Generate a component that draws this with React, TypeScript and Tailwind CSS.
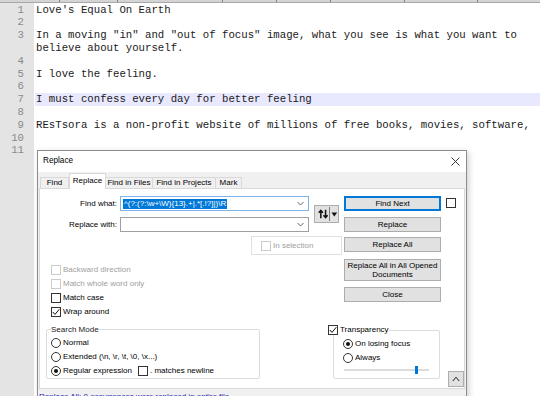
import React from "react";

type Line = { n: string; text: string; hl?: boolean };

const lines: Line[] = [
  { n: "1", text: "Love's Equal On Earth" },
  { n: "2", text: "" },
  { n: "3", text: 'In a moving "in" and "out of focus" image, what you see is what you want to' },
  { n: "", text: "believe about yourself." },
  { n: "4", text: "" },
  { n: "5", text: "I love the feeling." },
  { n: "6", text: "" },
  { n: "7", text: "I must confess every day for better feeling", hl: true },
  { n: "8", text: "" },
  { n: "9", text: "REsTsora is a non-profit website of millions of free books, movies, software," },
  { n: "10", text: "" },
  { n: "11", text: "" },
];

function Check({ checked, disabled }: { checked?: boolean; disabled?: boolean }) {
  return (
    <span
      className={
        disabled
          ? "w-[10px] h-[10px] border border-[#cccccc] bg-white flex items-center justify-center shrink-0"
          : "w-[10px] h-[10px] border border-[#333333] bg-white flex items-center justify-center shrink-0"
      }
    >
      {checked && (
        <svg width="8" height="8" viewBox="0 0 8 8">
          <polyline points="0.8,4 3,6.4 7.3,1.2" fill="none" stroke="#111" strokeWidth="1" />
        </svg>
      )}
    </span>
  );
}

function Radio({ checked }: { checked?: boolean }) {
  return (
    <span className="w-[10px] h-[10px] rounded-full border border-[#333333] bg-white flex items-center justify-center shrink-0">
      {checked && <span className="w-[4px] h-[4px] rounded-full bg-[#111111]" />}
    </span>
  );
}

function Chevron() {
  return (
    <svg width="7" height="5" viewBox="0 0 7 5" className="shrink-0">
      <polyline points="0.5,1 3.5,4 6.5,1" fill="none" stroke="#555" strokeWidth="0.9" />
    </svg>
  );
}

function Btn({ children, className }: { children: React.ReactNode; className: string }) {
  return (
    <div className={"flex items-center justify-center text-center leading-[9px] bg-[#e1e1e1] " + className}>
      {children}
    </div>
  );
}

export default function App() {
  return (
    <div className="relative w-[540px] h-[396px] overflow-hidden bg-white">
      {/* tab bar remnant */}
      <div className="h-[3px] flex bg-[#d4d4d4] border-b border-[#a8a8a8]">
        <div className="w-[60px] border-r border-[#808080]" />
        <div className="w-[58px] border-r border-[#808080]" />
        <div className="w-[105px] border-r border-[#808080]" />
        <div className="w-[54px] border-r border-[#808080]" />
        <div className="w-[54px] border-r border-[#808080]" />
        <div className="w-[74px] border-r border-[#808080]" />
        <div className="w-[73px] border-r border-[#808080]" />
        <div className="flex-1" />
      </div>

      {/* editor */}
      <div className="flex h-[393px] pt-[0.6px] font-['Liberation_Mono','Courier_New',monospace] text-[10.7px]">
        <div className="w-[34px] bg-[#e4e4e4] text-[#8a8a8a] -mt-[0.6px] pt-[0.6px]">
          {lines.map((l, i) => (
            <div key={i} className="h-[12.8px] leading-[12.8px] w-[24px] text-right">
              {l.n}
            </div>
          ))}
        </div>
        <div className="flex-1 pl-[2px] text-[#1a1a1a]">
          {lines.map((l, i) => (
            <div
              key={i}
              className={
                l.hl
                  ? "h-[12.8px] leading-[12.8px] whitespace-pre bg-[#e8e8ff] -ml-[1px] pl-[1px]"
                  : "h-[12.8px] leading-[12.8px] whitespace-pre"
              }
            >
              {l.text}
            </div>
          ))}
        </div>
      </div>

      {/* Replace dialog */}
      <div className="absolute left-[37px] top-[150px] w-[430px] h-[260px] border border-[#8c8c8c] bg-[#f0f0f0] shadow-[2px_2px_6px_rgba(0,0,0,0.18)] font-['Liberation_Sans',Arial,sans-serif] text-[8px] text-black">
        {/* title */}
        <div className="h-[21px] bg-white flex items-center justify-between pl-[5px] pr-[6px]">
          <span className="text-[8.2px]">Replace</span>
          <svg width="9" height="9" viewBox="0 0 9 9">
            <line x1="0.5" y1="0.5" x2="8.5" y2="8.5" stroke="#222" strokeWidth="0.9" />
            <line x1="8.5" y1="0.5" x2="0.5" y2="8.5" stroke="#222" strokeWidth="0.9" />
          </svg>
        </div>

        {/* tabs */}
        <div className="h-[16px] flex items-end pl-[2px]">
          <div className="w-[29px] h-[11px] border border-b-0 border-[#d9d9d9] bg-[#f0f0f0] flex items-center justify-center">Find</div>
          <div className="relative z-10 w-[37px] h-[16px] -mb-[1px] border border-b-0 border-[#d9d9d9] bg-white flex items-center justify-center pb-[1px]">Replace</div>
          <div className="w-[47px] h-[11px] border border-b-0 border-l-0 border-[#d9d9d9] bg-[#f0f0f0] flex items-center justify-center">Find in Files</div>
          <div className="w-[63px] h-[11px] border border-b-0 border-l-0 border-[#d9d9d9] bg-[#f0f0f0] flex items-center justify-center">Find in Projects</div>
          <div className="w-[26px] h-[11px] border border-b-0 border-l-0 border-[#d9d9d9] bg-[#f0f0f0] flex items-center justify-center">Mark</div>
        </div>

        {/* panel */}
        <div className="ml-[1px] w-[426px] h-[201px] border border-[#d9d9d9] bg-white flex flex-col">
          {/* top section */}
          <div className="flex items-start pt-[7px]">
            <div className="w-[302px] flex flex-col">
              <div className="flex items-center">
                <div className="flex flex-col gap-[6px]">
                  <div className="flex items-center h-[15px]">
                    <span className="w-[80px] text-right pr-[3px]">Find what:</span>
                    <div className="w-[189px] h-[15px] border border-[#7eb4ea] bg-white flex items-center pl-[2px] pr-[4px]">
                      <span className="bg-[#0078d7] text-white leading-[10px] px-[1px] whitespace-pre">{"^(?:(?:\\w+\\W){13}.+|.*[.!?]|)\\R"}</span>
                      <span className="flex-1" />
                      <Chevron />
                    </div>
                  </div>
                  <div className="flex items-center h-[15px]">
                    <span className="w-[80px] text-right pr-[3px]">Replace with:</span>
                    <div className="w-[189px] h-[15px] border border-[#a0a0a0] bg-white flex items-center pr-[4px]">
                      <span className="flex-1" />
                      <Chevron />
                    </div>
                  </div>
                </div>
                <div className="ml-[5px] w-[25px] h-[18px] border border-[#adadad] bg-[#e1e1e1] flex items-center pl-[3px]">
                  <svg width="11" height="10" viewBox="0 0 11 10">
                    <path d="M3 9.5V1.5M0.8 3.8L3 1.2L5.2 3.8" fill="none" stroke="#111" strokeWidth="1.6" />
                    <path d="M8 0.5V8.5M5.8 6.2L8 8.8L10.2 6.2" fill="none" stroke="#111" strokeWidth="1.6" />
                  </svg>
                  <span className="ml-[1px] w-[1px] h-[14px] bg-[#7a7a7a]" />
                  <svg width="7" height="5" viewBox="0 0 7 5" className="ml-[1px]">
                    <polygon points="0.5,0.5 6.5,0.5 3.5,4.5" fill="#111" />
                  </svg>
                </div>
              </div>

              <div className="ml-[211px] mt-[4px] w-[91px] h-[19px] border border-[#e0e0e0] flex items-center pl-[9px] text-[#a0a0a0]">
                <Check disabled />
                <span className="ml-[2px]">In selection</span>
              </div>

              <div className="mt-[8px] ml-[11px] flex flex-col">
                <div className="h-[14px] flex items-center text-[#a0a0a0]">
                  <Check disabled />
                  <span className="ml-[2px]">Backward direction</span>
                </div>
                <div className="h-[14px] flex items-center text-[#a0a0a0]">
                  <Check disabled />
                  <span className="ml-[2px]">Match whole word only</span>
                </div>
                <div className="h-[14px] flex items-center">
                  <Check />
                  <span className="ml-[2px]">Match case</span>
                </div>
                <div className="h-[14px] flex items-center">
                  <Check checked />
                  <span className="ml-[2px]">Wrap around</span>
                </div>
              </div>
            </div>

            <div className="ml-[2px] w-[97px] flex flex-col">
              <Btn className="h-[15px] border border-[#0078d7] outline outline-1 outline-[#0078d7] -outline-offset-2">Find Next</Btn>
              <Btn className="mt-[6px] h-[15px] border border-[#adadad]">Replace</Btn>
              <Btn className="mt-[5px] h-[15px] border border-[#adadad]">Replace All</Btn>
              <Btn className="mt-[7px] h-[22px] border border-[#adadad]">
                Replace All in All Opened
                <br />
                Documents
              </Btn>
              <Btn className="mt-[6px] h-[15px] border border-[#adadad]">Close</Btn>
            </div>
            <div className="ml-[5px] mt-[2px]">
              <Check />
            </div>
          </div>

          {/* bottom section */}
          <div className="flex items-start mt-[6px]">
            <fieldset className="ml-[6px] w-[214px] border border-[#dcdcdc] rounded-[2px] px-[4px]">
              <legend className="px-0 leading-[9px] text-[#222]">Search Mode</legend>
              <div className="mt-[2px] h-[14px] flex items-center">
                <Radio />
                <span className="ml-[2px]">Normal</span>
              </div>
              <div className="h-[14px] flex items-center">
                <Radio />
                <span className="ml-[2px]">{"Extended (\\n, \\r, \\t, \\0, \\x...)"}</span>
              </div>
              <div className="h-[14px] flex items-center">
                <Radio checked />
                <span className="ml-[2px] w-[75px]">Regular expression</span>
                <Check />
                <span className="ml-[2px]">. matches newline</span>
              </div>
            </fieldset>

            <fieldset className="ml-[73px] w-[107px] border border-[#dcdcdc] rounded-[2px] pl-[9px] pb-[3px]">
              <legend className="-ml-[15px] px-0 h-[10px] flex items-center">
                <Check checked />
                <span className="ml-[2px]">Transparency</span>
              </legend>
              <div className="mt-[2px] h-[14px] flex items-center">
                <Radio checked />
                <span className="ml-[2px]">On losing focus</span>
              </div>
              <div className="h-[14px] flex items-center">
                <Radio />
                <span className="ml-[2px]">Always</span>
              </div>
              <div className="h-[10px] flex items-center">
                <div className="relative ml-[1px] w-[85px] h-[2px] bg-[#dcdcdc]">
                  <span className="absolute left-[71px] -top-[3px] w-[3px] h-[8px] bg-[#0078d7]" />
                </div>
              </div>
            </fieldset>

            <div className="ml-[8px] mt-[46px] w-[16px] h-[16px] border border-[#adadad] bg-[#e1e1e1] flex items-center justify-center">
              <svg width="8" height="6" viewBox="0 0 8 6">
                <polyline points="0.8,5 4,1.2 7.2,5" fill="none" stroke="#222" strokeWidth="1" />
              </svg>
            </div>
          </div>
        </div>

        {/* status */}
        <div className="pl-[1px] pt-[3px] leading-[10px] text-[#2222b0] whitespace-nowrap">
          Replace All: 0 occurrences were replaced in entire file.
        </div>
      </div>
    </div>
  );
}
